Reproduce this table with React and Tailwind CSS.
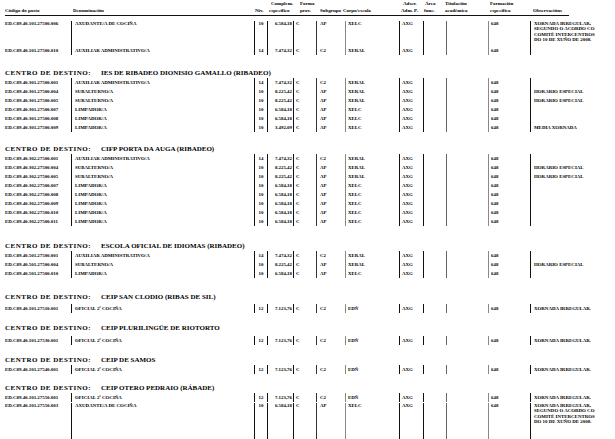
import React from 'react';

// puesto -> [subgrupo, corpo/escala]
const JOBS = {
    'AXUDANTE/A DE COCIÑA': ['AP', 'XELC'],
    'AUXILIAR ADMINISTRATIVO/A': ['C2', 'XERAL'],
    'SUBALTERNO/A': ['AP', 'XERAL'],
    'LIMPADOR/A': ['AP', 'XELC'],
    'OFICIAL 2ª COCIÑA': ['C2', 'EDÑ'],
};

const ACORDO = ['XORNADA IRREGULAR,', 'SEGUNDO O ACORDO CO', 'COMITÉ INTERCENTROS', 'DO 10 DE XUÑO DE 2008.'];

const ROW = 'h-[9px] leading-[9px]';

const SECTIONS = [
    {
        head: null, mt: 'mt-[3px]',
        rows: [
            ['ED.C89.40.101.27500.006', 'AXUDANTE/A DE COCIÑA', '10', '6.584,18', ACORDO, 'h-[27px] pt-[1.5px] leading-[5.5px]'],
            ['ED.C89.40.101.27500.010', 'AUXILIAR ADMINISTRATIVO/A', '14', '7.474,32', null, ROW],
        ],
    },
    {
        head: 'IES DE RIBADEO DIONISIO GAMALLO (RIBADEO)', mt: 'mt-[13.5px]', gap: '',
        rows: [
            ['ED.C89.40.301.27500.001', 'AUXILIAR ADMINISTRATIVO/A', '14', '7.474,32', null, ROW],
            ['ED.C89.40.301.27500.004', 'SUBALTERNO/A', '10', '8.225,42', ['HORARIO ESPECIAL'], ROW],
            ['ED.C89.40.301.27500.005', 'SUBALTERNO/A', '10', '8.225,42', ['HORARIO ESPECIAL'], ROW],
            ['ED.C89.40.301.27500.007', 'LIMPADOR/A', '10', '6.584,18', null, ROW],
            ['ED.C89.40.301.27500.008', 'LIMPADOR/A', '10', '6.584,18', null, ROW],
            ['ED.C89.40.301.27500.009', 'LIMPADOR/A', '10', '3.492,09', ['MEDIA XORNADA'], ROW],
        ],
    },
    {
        head: 'CIFP PORTA DA AUGA (RIBADEO)', mt: 'mt-[13px]', gap: '',
        rows: [
            ['ED.C89.40.302.27500.001', 'AUXILIAR ADMINISTRATIVO/A', '14', '7.474,32', null, ROW],
            ['ED.C89.40.302.27500.004', 'SUBALTERNO/A', '10', '8.225,42', ['HORARIO ESPECIAL'], ROW],
            ['ED.C89.40.302.27500.005', 'SUBALTERNO/A', '10', '8.225,42', ['HORARIO ESPECIAL'], ROW],
            ['ED.C89.40.302.27500.007', 'LIMPADOR/A', '10', '6.584,18', null, ROW],
            ['ED.C89.40.302.27500.008', 'LIMPADOR/A', '10', '6.584,18', null, ROW],
            ['ED.C89.40.302.27500.009', 'LIMPADOR/A', '10', '6.584,18', null, ROW],
            ['ED.C89.40.302.27500.010', 'LIMPADOR/A', '10', '6.584,18', null, ROW],
            ['ED.C89.40.302.27500.011', 'LIMPADOR/A', '10', '6.584,18', null, ROW],
        ],
    },
    {
        head: 'ESCOLA OFICIAL DE IDIOMAS (RIBADEO)', mt: 'mt-[16px]', gap: '',
        rows: [
            ['ED.C89.40.501.27500.001', 'AUXILIAR ADMINISTRATIVO/A', '14', '7.474,32', null, ROW],
            ['ED.C89.40.501.27500.004', 'SUBALTERNO/A', '10', '8.225,42', ['HORARIO ESPECIAL'], ROW],
            ['ED.C89.40.501.27500.010', 'LIMPADOR/A', '10', '6.584,18', null, ROW],
        ],
    },
    {
        head: 'CEIP SAN CLODIO (RIBAS DE SIL)', mt: 'mt-[15px]', gap: 'mt-[2px]',
        rows: [
            ['ED.C89.40.101.27510.001', 'OFICIAL 2ª COCIÑA', '12', '7.123,76', ['XORNADA IRREGULAR.'], ROW],
        ],
    },
    {
        head: 'CEIP PLURILINGÜE DE RIOTORTO', mt: 'mt-[11px]', gap: 'mt-[3px]',
        rows: [
            ['ED.C89.40.101.27530.001', 'OFICIAL 2ª COCIÑA', '12', '7.123,76', ['XORNADA IRREGULAR.'], ROW],
        ],
    },
    {
        head: 'CEIP DE SAMOS', mt: 'mt-[11px]', gap: '',
        rows: [
            ['ED.C89.40.101.27540.001', 'OFICIAL 2ª COCIÑA', '12', '7.123,76', ['XORNADA IRREGULAR.'], ROW],
        ],
    },
    {
        head: 'CEIP OTERO PEDRAIO (RÁBADE)', mt: 'mt-[10.5px]', gap: '',
        rows: [
            ['ED.C89.40.101.27550.001', 'OFICIAL 2ª COCIÑA', '12', '7.123,76', ['XORNADA IRREGULAR.'], ROW],
            ['ED.C89.40.101.27550.003', 'AXUDANTE/A DE COCIÑA', '10', '6.584,18', ACORDO, 'h-[37px] pt-[0.5px] leading-[5.5px]'],
        ],
    },
];

const GRID = 'grid grid-cols-[66px_183px_13px_26px_23px_29px_54px_24px_23px_42px_42px_1fr]';

function Row({ r }) {
    const [code, den, niv, comp, obs, cls] = r;
    const [sub, corpo] = JOBS[den];
    return (
        <div className={`${GRID} ${cls} text-[4.9px] font-bold whitespace-nowrap`}>
            <div>{code}</div>
            <div className="border-l border-[#111] pl-[3px]">{den}</div>
            <div className="border-l border-[#111] text-center">{niv}</div>
            <div className="border-l border-[#111] pr-[1px] text-right">{comp}</div>
            <div className="border-l border-[#111] pl-[2px]">C</div>
            <div className="border-l border-[#333] pl-[3px]">{sub}</div>
            <div className="border-l border-[#888] pl-[2px]">{corpo}</div>
            <div className="border-l border-[#111] pl-[2px]">AXG</div>
            <div className="border-l border-[#111]"></div>
            <div className="border-l border-[#666]"></div>
            <div className="border-l border-[#888] pl-[2px]">648</div>
            <div className="border-l border-[#111] pl-[3px]">
                {obs && obs.map((l) => <div key={l}>{l}</div>)}
            </div>
        </div>
    );
}

function Header() {
    return (
        <div className="grid h-[16px] w-[564px] grid-cols-[68px_182px_14px_31px_20px_23px_58px_23px_21px_45px_43px_1fr] items-end border-b border-[#111] pb-[1px] text-[5px] font-bold leading-[7px] whitespace-nowrap">
            <div>Código do posto</div>
            <div>Denominación</div>
            <div>Niv.</div>
            <div><div className="pl-[2px]">Complem.</div><div>específico</div></div>
            <div><div>Forma</div><div>prov.</div></div>
            <div>Subgrupo</div>
            <div>Corpo/escala</div>
            <div><div className="pl-[2px]">Adscr.</div><div>Adm. P.</div></div>
            <div><div className="pl-[1px]">Área</div><div>func.</div></div>
            <div><div>Titulación</div><div>académica</div></div>
            <div><div>Formación</div><div>específica</div></div>
            <div>Observacións</div>
        </div>
    );
}

export default function App() {
    return (
        <div className="h-[439px] w-[615px] overflow-hidden bg-white pl-[5px] font-['Liberation_Serif',serif] text-black">
            <Header />
            {SECTIONS.map((s, i) => (
                <div key={i} className={s.mt}>
                    {s.head && (
                        <div className="flex h-[9px] items-center text-[7px] font-bold leading-[9px] whitespace-nowrap">
                            <span className="w-[96px] tracking-[0.5px]">CENTRO DE DESTINO:</span>
                            <span>{s.head}</span>
                        </div>
                    )}
                    <div className={s.gap}>
                        {s.rows.map((r) => <Row key={r[0]} r={r} />)}
                    </div>
                </div>
            ))}
        </div>
    );
}
